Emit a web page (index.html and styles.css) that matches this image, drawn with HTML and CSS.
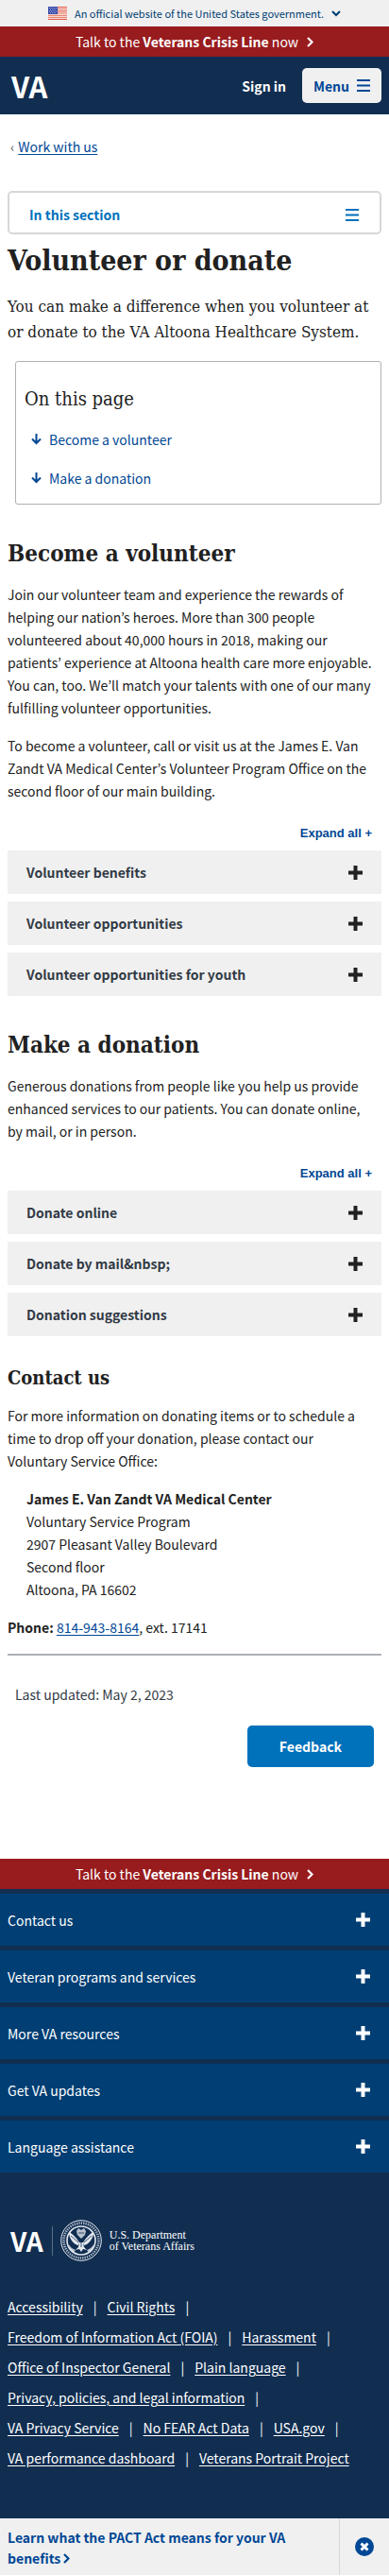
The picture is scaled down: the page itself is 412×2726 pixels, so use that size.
FILE: index.html
```html
<!DOCTYPE html>
<html lang="en">
<head>
<meta charset="utf-8">
<meta name="viewport" content="width=device-width, initial-scale=1">
<title>Volunteer or donate | VA Altoona Health Care</title>
<link rel="stylesheet" href="styles.css">
</head>
<body>
<svg class="sprite" aria-hidden="true">
  <symbol id="plus" viewBox="0 0 15 15"><path d="M5.500 0h4v5.500H15v4H9.500V15h-4V9.500H0v-4h5.500z"/></symbol>
  <symbol id="bars" viewBox="0 0 14 13"><path d="M0 0h14v2H0zM0 5.500h14v2H0zM0 11h14v2H0z"/></symbol>
  <symbol id="chevron" viewBox="0 0 7 11"><path d="M1 1l4.500 4.500L1 10" fill="none" stroke="currentColor" stroke-width="2.200"/></symbol>
  <symbol id="down" viewBox="0 0 11 12"><path d="M5.500 0v10M1 5.500l4.500 4.500L10 5.500" fill="none" stroke="currentColor" stroke-width="2"/></symbol>
</svg>

<button class="gov-banner" type="button">
  <svg class="flag" viewBox="0 0 20 14" aria-hidden="true">
    <path fill="#fff" d="M0 0h20v14H0z"/>
    <path stroke="#e0604a" stroke-width="1.100" d="M0 .6h20M0 2.700h20M0 4.900h20M0 7h20M0 9.200h20M0 11.300h20M0 13.400h20"/>
    <path fill="#3548a8" d="M0 0h10v8H0z"/>
    <path stroke="#b9c2ea" stroke-dasharray="1 1.300" d="M1 1.500h8M2 3.200h7M1 4.900h8M2 6.600h7"/>
  </svg>
  <span>An official website of the United States government.</span>
  <svg class="caret" viewBox="0 0 10 7" aria-hidden="true"><path d="M1 1l4 4 4-4" fill="none" stroke="currentColor" stroke-width="2"/></svg>
</button>
<a class="crisis" href="#crisis"><span>Talk to the <strong>Veterans Crisis Line</strong> now</span><svg class="chevron" aria-hidden="true"><use href="#chevron"/></svg></a>

<header class="header">
  <a class="va-logo" href="#home">VA</a>
  <a class="sign-in" href="#sign-in">Sign in</a>
  <button class="menu-button" type="button">Menu <svg class="bars" aria-hidden="true"><use href="#bars"/></svg></button>
</header>

<main class="main">
  <nav class="breadcrumb" aria-label="Breadcrumb"><span class="back">‹</span><a href="#work">Work with us</a></nav>
  <button class="section-nav" type="button">In this section <svg class="bars" aria-hidden="true"><use href="#bars"/></svg></button>

  <h1>Volunteer or donate</h1>
  <p class="intro">You can make a difference when you volunteer at or donate to the VA Altoona Healthcare System.</p>

  <nav class="toc" aria-labelledby="toc-title">
    <h2 class="toc-title" id="toc-title">On this page</h2>
    <a href="#become"><svg class="down" aria-hidden="true"><use href="#down"/></svg>Become a volunteer</a>
    <a href="#donation"><svg class="down" aria-hidden="true"><use href="#down"/></svg>Make a donation</a>
  </nav>

  <section class="section" id="become">
    <h2>Become a volunteer</h2>
    <p>Join our volunteer team and experience the rewards of helping our nation’s heroes. More than 300 people volunteered about 40,000 hours in 2018, making our patients’ experience at Altoona health care more enjoyable. You can, too. We’ll match your talents with one of our many fulfilling volunteer opportunities.</p>
    <p>To become a volunteer, call or visit us at the James E. Van Zandt VA Medical Center’s Volunteer Program Office on the second floor of our main building.</p>
    <div class="accordion">
      <button class="expand" type="button">Expand all +</button>
      <button class="item" type="button">Volunteer benefits <svg class="plus" aria-hidden="true"><use href="#plus"/></svg></button>
      <button class="item" type="button">Volunteer opportunities <svg class="plus" aria-hidden="true"><use href="#plus"/></svg></button>
      <button class="item" type="button">Volunteer opportunities for youth <svg class="plus" aria-hidden="true"><use href="#plus"/></svg></button>
    </div>
  </section>

  <section class="section" id="donation">
    <h2>Make a donation</h2>
    <p>Generous donations from people like you help us provide enhanced services to our patients. You can donate online, by mail, or in person.</p>
    <div class="accordion">
      <button class="expand" type="button">Expand all +</button>
      <button class="item" type="button">Donate online <svg class="plus" aria-hidden="true"><use href="#plus"/></svg></button>
      <button class="item" type="button">Donate by mail&amp;nbsp; <svg class="plus" aria-hidden="true"><use href="#plus"/></svg></button>
      <button class="item" type="button">Donation suggestions <svg class="plus" aria-hidden="true"><use href="#plus"/></svg></button>
    </div>
  </section>

  <section class="section">
    <h3>Contact us</h3>
    <p>For more information on donating items or to schedule a time to drop off your donation, please contact our Voluntary Service Office:</p>
    <address class="address"><strong>James E. Van Zandt VA Medical Center</strong><br>Voluntary Service Program<br>2907 Pleasant Valley Boulevard<br>Second floor<br>Altoona, PA 16602</address>
    <p><strong>Phone:</strong> <a href="tel:8149438164">814-943-8164</a>, ext. 17141</p>
  </section>

  <div class="updated">Last updated: <time datetime="2023-05-02">May 2, 2023</time></div>
  <button class="feedback" type="button">Feedback</button>
</main>

<footer class="footer">
  <a class="crisis" href="#crisis"><span>Talk to the <strong>Veterans Crisis Line</strong> now</span><svg class="chevron" aria-hidden="true"><use href="#chevron"/></svg></a>
  <div class="footer-menu">
    <button type="button">Contact us <svg class="plus" aria-hidden="true"><use href="#plus"/></svg></button>
    <button type="button">Veteran programs and services <svg class="plus" aria-hidden="true"><use href="#plus"/></svg></button>
    <button type="button">More VA resources <svg class="plus" aria-hidden="true"><use href="#plus"/></svg></button>
    <button type="button">Get VA updates <svg class="plus" aria-hidden="true"><use href="#plus"/></svg></button>
    <button type="button">Language assistance <svg class="plus" aria-hidden="true"><use href="#plus"/></svg></button>
  </div>
  <a class="department" href="#home">
    <span class="department-va">VA</span>
    <svg class="seal" viewBox="0 0 44 44" aria-hidden="true">
      <g fill="none" stroke="#e4e9f0">
        <circle cx="22" cy="22" r="21.300" stroke-width="1"/>
        <circle cx="22" cy="22" r="18.500" stroke-width="2.600" stroke-dasharray="1.300 1.100" opacity=".75"/>
        <circle cx="22" cy="22" r="15" stroke-width="1.600"/>
      </g>
      <g fill="#e4e9f0">
        <path d="M9 13c4 2 8 6 11 11l-1 3c-5-1-10-7-10-14zM35 13c-4 2-8 6-11 11l1 3c5-1 10-7 10-14z"/>
        <path d="M17 12l2-3 3 2 3-2 2 3-1 4-4 4-4-4z" opacity=".8"/>
        <path d="M20 24h4l1 5 3 3-4-1-2 3-2-3-4 1 3-3z"/>
        <path d="M9 26c1 3 4 5 7 6l-2 3c-3-2-5-5-5-9zM35 26c-1 3-4 5-7 6l2 3c3-2 5-5 5-9z" opacity=".8"/>
      </g>
      <path d="M11 17l8 7M33 17l-8 7M19 14h6M22 20v9" fill="none" stroke="#112e51" stroke-width=".8"/>
    </svg>
    <span class="department-name">U.S. Department<br>of Veterans Affairs</span>
  </a>
  <ul class="legal">
    <li><a href="#a">Accessibility</a></li>
    <li><a href="#b">Civil Rights</a></li>
    <li><a href="#c">Freedom of Information Act (FOIA)</a></li>
    <li><a href="#d">Harassment</a></li>
    <li><a href="#e">Office of Inspector General</a></li>
    <li><a href="#f">Plain language</a></li>
    <li><a href="#g">Privacy, policies, and legal information</a></li>
    <li><a href="#h">VA Privacy Service</a></li>
    <li><a href="#i">No FEAR Act Data</a></li>
    <li><a href="#j">USA.gov</a></li>
    <li><a href="#k">VA performance dashboard</a></li>
    <li><a href="#l">Veterans Portrait Project</a></li>
  </ul>
</footer>

<aside class="promo">
  <a class="promo-link" href="#pact">Learn what the PACT Act means for your VA benefits <svg class="chevron" aria-hidden="true"><use href="#chevron"/></svg></a>
  <button class="promo-close" type="button" aria-label="Dismiss this banner">
    <svg viewBox="0 0 20 20" aria-hidden="true"><circle cx="10" cy="10" r="10" fill="#004795"/><path d="M6.500 6.500l7 7M13.500 6.500l-7 7" stroke="#fff" stroke-width="3"/></svg>
  </button>
</aside>
</body>
</html>
```

FILE: styles.css
```css
* { box-sizing: border-box; }
body {
  margin: 0;
  color: #212121;
  background: #fff;
  font: 14px/24px "Noto Sans CJK KR", "Noto Sans", sans-serif;
}
button { font: inherit; border: 0; margin: 0; padding: 0; cursor: pointer; text-align: left; }
a { color: #004795; text-underline-offset: 2px; }
h1, h2, h3, .intro { font-family: "DejaVu Serif Condensed", "DejaVu Serif", serif; }
h1, h2, h3, p { margin: 0; }
.sprite { position: absolute; width: 0; height: 0; }
.plus { width: 15px; height: 15px; fill: currentColor; flex: none; }
.bars { width: 14px; height: 13px; fill: currentColor; flex: none; }
.chevron { width: 7px; height: 11px; flex: none; }
.down { width: 11px; height: 12px; flex: none; }

.gov-banner {
  display: flex; align-items: center; justify-content: center; gap: 8px;
  width: 100%; height: 28px; background: #f0f0f0; color: #003e73;
  font-size: 11px; line-height: 16px;
}
.flag { width: 20px; height: 14px; }
.caret { width: 10px; height: 7px; }
.crisis {
  display: flex; align-items: center; justify-content: center; gap: 9px;
  height: 32px; background: #981b1e; color: #fff; text-decoration: none;
}
.header {
  display: flex; align-items: center; height: 61px; padding: 0 8px 0 12px;
  background: #112e51;
}
.va-logo {
  margin-right: auto; color: #fff; text-decoration: none;
  font-size: 31px; line-height: 32px; font-weight: 700;
}
.sign-in { color: #fff; font-weight: 700; text-decoration: none; }
.menu-button {
  display: flex; align-items: center; gap: 8px; height: 37px; margin-left: 17px; padding: 0 12px;
  border-radius: 5px; background: #f0f0f0; color: #004795; font-weight: 700;
}

.main { padding: 0 8px; }
.breadcrumb { display: flex; gap: 4px; padding: 22px 3px 0; }
.back { color: #555; }
.section-nav {
  display: flex; align-items: center; justify-content: space-between;
  width: 100%; height: 46px; margin-top: 35px; padding: 4px 22px 0 21px;
  border: 2px solid #d6d7d9; border-radius: 5px; background: #fff;
  color: #0071bb; font-weight: 700;
}
h1 { margin-top: 8px; font-size: 30px; line-height: 40px; }
.intro { margin-top: 15px; font-size: 17px; line-height: 27px; }
.toc {
  display: flex; flex-direction: column; align-items: flex-start;
  margin: 17px 0 0 8px; padding: 26px 9px 6px; border: 1px solid #aeb0b5; border-radius: 3px;
}
.toc-title { font-size: 20px; line-height: 26px; font-weight: 400; margin-bottom: 10px; }
.toc a { display: flex; align-items: center; gap: 8px; padding: 8px 7px 9px; text-decoration: none; }
.section > h2 { padding-top: 36px; font-size: 24px; line-height: 32px; margin-bottom: 15px; }
.section > h3 { padding-top: 30px; font-size: 20px; line-height: 28px; margin-bottom: 14px; }
.section > p { padding-right: 10px; }
.section > p + p { margin-top: 16px; }
.accordion { display: flex; flex-direction: column; gap: 8px; margin-top: 22px; }
.expand {
  align-self: flex-end; margin-right: 10px; background: none; color: #004795;
  font: 700 13px/21px "Liberation Sans", Arial, sans-serif;
}
.item {
  display: flex; align-items: center; justify-content: space-between;
  height: 46px; padding: 0 20px; background: #f0f0f0; color: #323a45; font-weight: 700;
}
.item .plus { color: #212121; }
.address { margin: 16px 20px; font-style: normal; }
.updated { margin-top: 16px; padding: 29px 8px 21px; border-top: 2px solid #aeb0b5; color: #323a45; }
.feedback {
  display: block; margin: 0 8px 97px auto; padding: 10px 34px; border-radius: 5px;
  background: #0071bb; color: #fff; font-weight: 700;
}

.footer { background: #112e51; color: #fff; }
.footer a { color: #fff; }
.footer-menu { display: flex; flex-direction: column; gap: 5px; padding-top: 5px; }
.footer-menu button {
  display: flex; align-items: center; justify-content: space-between;
  height: 55px; padding: 0 20px 0 8px; background: #003e73; color: #fff;
}
.department {
  display: flex; align-items: center; padding: 50px 8px 32px 11px; text-decoration: none;
}
.department-va {
  padding-right: 9px; border-right: 1px solid #5b6d87;
  font-size: 28px; line-height: 31px; font-weight: 700;
}
.seal { width: 44px; height: 44px; margin: 0 8px; }
.department-name { font: 12px/12px "Liberation Serif", serif; }
.legal {
  display: flex; flex-wrap: wrap; margin: 0; padding: 0 8px 48px; list-style: none;
}
.legal li { line-height: 32px; white-space: nowrap; }
.legal li:not(:last-child)::after { content: "|"; margin: 0 11px; }

.promo { display: flex; min-height: 60px; background: #f0f0f0; }
.promo-link {
  flex: 1; padding: 9px 40px 7px 8px; color: #004795; font-weight: 700; line-height: 22px; text-decoration: none;
}
.promo-close {
  display: flex; align-items: center; justify-content: center;
  width: 53px; background: none; border-left: 1px solid #d6d7d9;
}
.promo-close svg { width: 20px; height: 20px; }
```
